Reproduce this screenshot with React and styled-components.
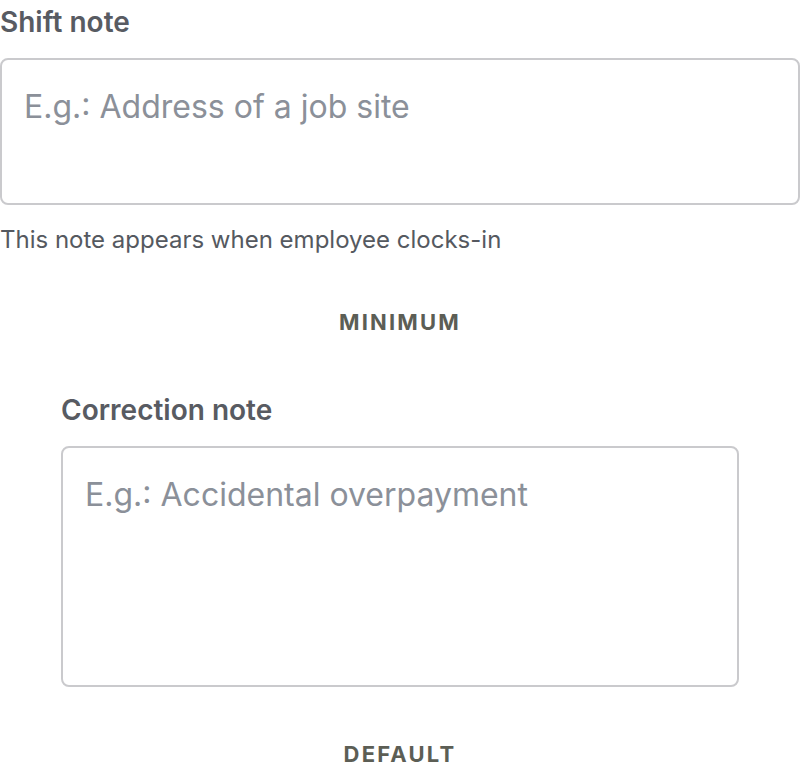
import React from "react";
import styled, { createGlobalStyle } from "styled-components";

const GlobalStyle = createGlobalStyle`
  html, body {
    margin: 0;
    padding: 0;
    background: #ffffff;
  }
  body {
    font-family: Inter, "Noto Sans", sans-serif;
  }
`;

const Page = styled.div`
  display: flex;
  flex-direction: column;
  width: 800px;
`;

const Field = styled.div`
  display: flex;
  flex-direction: column;
  padding: 0 ${(p) => p.$inset || 0}px;
`;

const Label = styled.label`
  font-size: 28px;
  font-weight: 600;
  color: #585b62;
  line-height: 36px;
  margin-top: 4px;
  margin-bottom: 18px;
`;

const TextArea = styled.textarea`
  box-sizing: border-box;
  width: 100%;
  height: ${(p) => p.$height}px;
  border: 2px solid #cacacd;
  border-radius: 8px;
  padding: 24px 22px;
  font-family: Inter, "Noto Sans", sans-serif;
  font-size: 32px;
  line-height: 46px;
  color: #2b2e33;
  resize: none;
  outline: none;
  &::placeholder {
    color: #8b9099;
  }
`;

const Hint = styled.p`
  margin: 19px 0 0;
  font-size: 24px;
  line-height: 32px;
  color: #555960;
`;

const StoryTitle = styled.h3`
  margin: ${(p) => p.$top}px 0 ${(p) => p.$bottom}px;
  text-align: center;
  font-size: 22px;
  line-height: 30px;
  font-weight: 700;
  letter-spacing: 0.1em;
  text-transform: uppercase;
  color: #5c5e55;
`;

export default function App() {
  return (
    <Page>
      <GlobalStyle />
      <Field>
        <Label>Shift note</Label>
        <TextArea $height={147} placeholder="E.g.: Address of a job site" />
        <Hint>This note appears when employee clocks-in</Hint>
      </Field>
      <StoryTitle $top={51} $bottom={51}>Minimum</StoryTitle>
      <Field $inset={61}>
        <Label>Correction note</Label>
        <TextArea $height={241} placeholder="E.g.: Accidental overpayment" />
      </Field>
      <StoryTitle $top={52} $bottom={0}>Default</StoryTitle>
    </Page>
  );
}
